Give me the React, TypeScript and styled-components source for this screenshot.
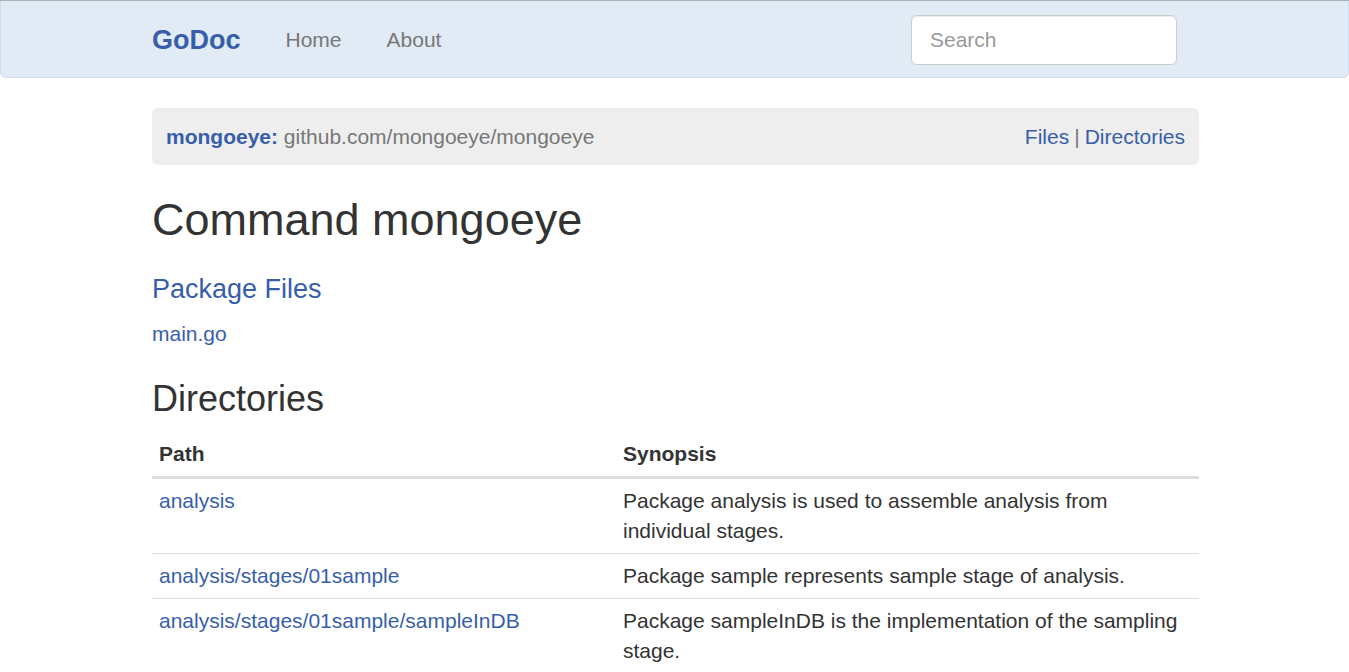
import React from "react";
import styled, { createGlobalStyle } from "styled-components";

const GlobalStyle = createGlobalStyle`
  html, body { margin: 0; padding: 0; background: #fff; }
  body {
    font-family: "Liberation Sans", Arial, Helvetica, sans-serif;
    font-size: 21px;
    line-height: 1.428571;
    color: #333;
  }
  * { box-sizing: border-box; }
`;

const TopLine = styled.div`
  height: 1px;
  background: #a9afb6;
`;

const Navbar = styled.nav`
  background: #e0ebf5;
  border: 1px solid #d0dfee;
  border-top: none;
  border-radius: 0 0 6px 6px;
  height: 77px;
  padding-top: 1px;
  margin-bottom: 30px;
`;

const Container = styled.div`
  width: 1049px;
  padding-left: 2px;
  margin: 0 auto;
`;

const NavInner = styled(Container)`
  display: flex;
  align-items: center;
  height: 100%;
`;

const Brand = styled.a`
  font-weight: bold;
  font-size: 27px;
  color: #375eab;
  text-decoration: none;
  padding-right: 22.5px;
  line-height: 30px;
`;

const NavLink = styled.a`
  color: #777;
  font-size: 21px;
  text-decoration: none;
  padding: 0 22.5px;
  line-height: 30px;
`;

const SearchForm = styled.form`
  margin-left: auto;
  margin-right: 22px;
  display: flex;
`;

const SearchInput = styled.input`
  width: 266px;
  height: 50px;
  border: 1px solid #ccc;
  border-radius: 6px;
  padding: 9px 18px;
  font-family: "Liberation Sans", Arial, sans-serif;
  font-size: 21px;
  color: #555;
  background: #fff;
  box-shadow: inset 0 1px 1px rgba(0,0,0,0.075);
  outline: none;
  &::placeholder { color: #999; }
`;

const Breadcrumb = styled.div`
  display: flex;
  align-items: center;
  justify-content: space-between;
  background: #eee;
  border-radius: 6px;
  height: 57px;
  padding: 0 14px;
  margin-bottom: 30px;
`;

const Crumb = styled.div`
  color: #777;
`;

const Link = styled.a<{ $bold?: boolean }>`
  color: #375eab;
  text-decoration: none;
  font-weight: ${(p) => (p.$bold ? "bold" : "normal")};
`;

const Sep = styled.span`
  color: #777;
  padding: 0 5px;
`;

const H1 = styled.h1`
  font-size: 45px;
  font-weight: 500;
  line-height: 1.1;
  margin: 0 0 30px;
  color: #333;
`;

const H3 = styled.h3`
  font-size: 27px;
  font-weight: 500;
  line-height: 1.1;
  margin: 0 0 15px;
`;

const P = styled.p`
  margin: 0 0 30px;
`;

const H2 = styled.h2`
  font-size: 36px;
  font-weight: 500;
  line-height: 1.1;
  margin: 0 0 12px;
  color: #333;
`;

const Table = styled.table`
  width: 100%;
  border-collapse: collapse;
  border-spacing: 0;
`;

const Th = styled.th<{ $w?: number }>`
  text-align: left;
  font-weight: bold;
  padding: 8.5px 7px 6.5px;
  border-bottom: 3px solid #ddd;
  vertical-align: bottom;
  width: ${(p) => (p.$w ? `${p.$w}px` : "auto")};
`;

const Td = styled.td`
  padding: 7px 7px;
  vertical-align: top;
  border-top: 1px solid #ddd;
`;

const FirstRow = styled.tr`
  & > td { border-top: none; }
`;

const rows = [
  {
    path: "analysis",
    synopsis: "Package analysis is used to assemble analysis from individual stages.",
  },
  {
    path: "analysis/stages/01sample",
    synopsis: "Package sample represents sample stage of analysis.",
  },
  {
    path: "analysis/stages/01sample/sampleInDB",
    synopsis: "Package sampleInDB is the implementation of the sampling stage.",
  },
];

export default function App() {
  return (
    <>
      <GlobalStyle />
      <TopLine />
      <Navbar>
        <NavInner>
          <Brand href="#">GoDoc</Brand>
          <NavLink href="#">Home</NavLink>
          <NavLink href="#">About</NavLink>
          <SearchForm onSubmit={(e) => e.preventDefault()}>
            <SearchInput type="text" placeholder="Search" />
          </SearchForm>
        </NavInner>
      </Navbar>
      <Container>
        <Breadcrumb>
          <Crumb>
            <Link $bold href="#">mongoeye:</Link> github.com/mongoeye/mongoeye
          </Crumb>
          <div>
            <Link href="#">Files</Link>
            <Sep>|</Sep>
            <Link href="#">Directories</Link>
          </div>
        </Breadcrumb>
        <H1>Command mongoeye</H1>
        <H3>
          <Link href="#">Package Files</Link>
        </H3>
        <P>
          <Link href="#">main.go</Link>
        </P>
        <H2>Directories</H2>
        <Table>
          <thead>
            <tr>
              <Th $w={464}>Path</Th>
              <Th>Synopsis</Th>
            </tr>
          </thead>
          <tbody>
            {rows.map((r, i) => {
              const cells = (
                <>
                  <Td>
                    <Link href="#">{r.path}</Link>
                  </Td>
                  <Td>{r.synopsis}</Td>
                </>
              );
              return i === 0 ? <FirstRow key={r.path}>{cells}</FirstRow> : <tr key={r.path}>{cells}</tr>;
            })}
          </tbody>
        </Table>
      </Container>
    </>
  );
}
